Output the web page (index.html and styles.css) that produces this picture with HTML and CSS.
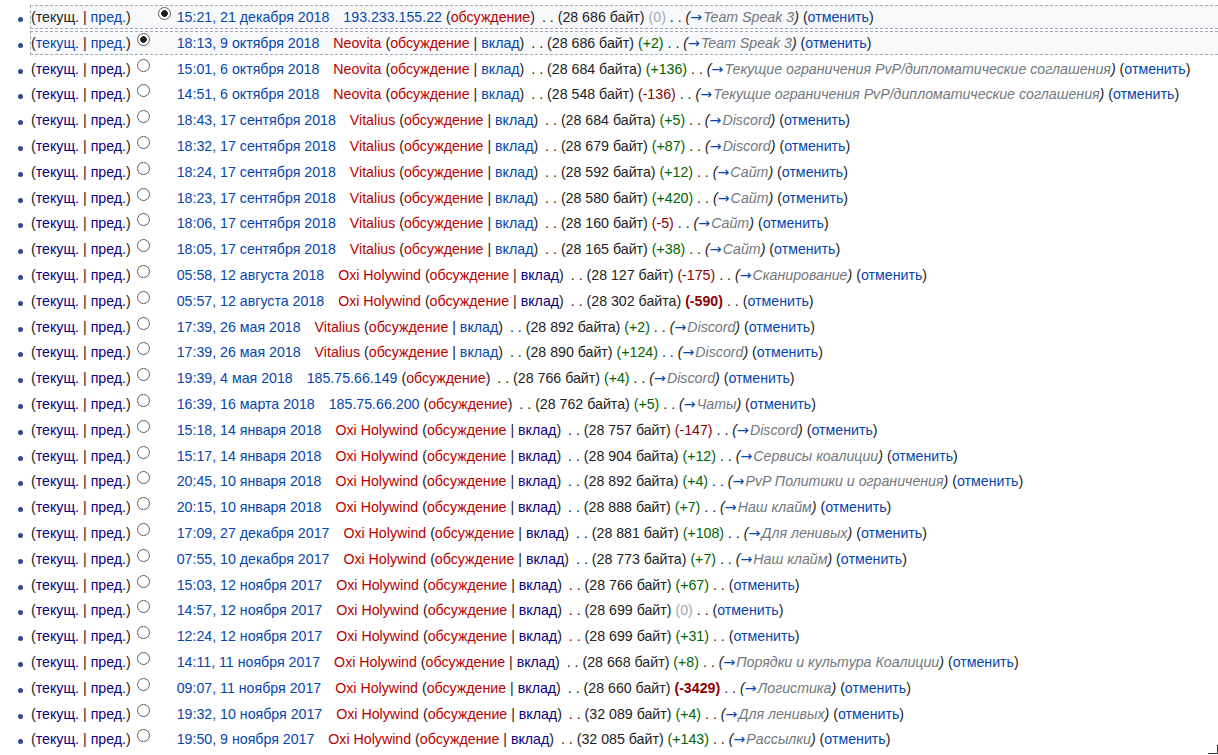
FILE: index.html
```html
<!DOCTYPE html>
<html lang="ru">
<head>
    <meta charset="UTF-8">
    <meta name="viewport" content="width=device-width, initial-scale=1.0">
    <title>История изменений</title>
    <link rel="stylesheet" href="styles.css">
</head>
<body>
    <!-- Список правок -->
    <ul id="pagehistory" class="history"></ul>

    <div class="grip"></div>

    <script>
        // дата, автор, тип автора, размер, разница, описание
        const revisions = [
            ['15:21, 21 декабря 2018', '193.233.155.22', 'ip', '28 686 байт', 0, 'Team Speak 3'],
            ['18:13, 9 октября 2018', 'Neovita', 'user', '28 686 байт', 2, 'Team Speak 3'],
            ['15:01, 6 октября 2018', 'Neovita', 'user', '28 684 байта', 136, 'Текущие ограничения PvP/дипломатические соглашения'],
            ['14:51, 6 октября 2018', 'Neovita', 'user', '28 548 байт', -136, 'Текущие ограничения PvP/дипломатические соглашения'],
            ['18:43, 17 сентября 2018', 'Vitalius', 'user', '28 684 байта', 5, 'Discord'],
            ['18:32, 17 сентября 2018', 'Vitalius', 'user', '28 679 байт', 87, 'Discord'],
            ['18:24, 17 сентября 2018', 'Vitalius', 'user', '28 592 байта', 12, 'Сайт'],
            ['18:23, 17 сентября 2018', 'Vitalius', 'user', '28 580 байт', 420, 'Сайт'],
            ['18:06, 17 сентября 2018', 'Vitalius', 'user', '28 160 байт', -5, 'Сайт'],
            ['18:05, 17 сентября 2018', 'Vitalius', 'user', '28 165 байт', 38, 'Сайт'],
            ['05:58, 12 августа 2018', 'Oxi Holywind', 'seen', '28 127 байт', -175, 'Сканирование'],
            ['05:57, 12 августа 2018', 'Oxi Holywind', 'seen', '28 302 байта', -590, null],
            ['17:39, 26 мая 2018', 'Vitalius', 'user', '28 892 байта', 2, 'Discord'],
            ['17:39, 26 мая 2018', 'Vitalius', 'user', '28 890 байт', 124, 'Discord'],
            ['19:39, 4 мая 2018', '185.75.66.149', 'ip', '28 766 байт', 4, 'Discord'],
            ['16:39, 16 марта 2018', '185.75.66.200', 'ip', '28 762 байта', 5, 'Чаты'],
            ['15:18, 14 января 2018', 'Oxi Holywind', 'seen', '28 757 байт', -147, 'Discord'],
            ['15:17, 14 января 2018', 'Oxi Holywind', 'seen', '28 904 байта', 12, 'Сервисы коалиции'],
            ['20:45, 10 января 2018', 'Oxi Holywind', 'seen', '28 892 байта', 4, 'PvP Политики и ограничения'],
            ['20:15, 10 января 2018', 'Oxi Holywind', 'seen', '28 888 байт', 7, 'Наш клайм'],
            ['17:09, 27 декабря 2017', 'Oxi Holywind', 'seen', '28 881 байт', 108, 'Для ленивых'],
            ['07:55, 10 декабря 2017', 'Oxi Holywind', 'seen', '28 773 байта', 7, 'Наш клайм'],
            ['15:03, 12 ноября 2017', 'Oxi Holywind', 'seen', '28 766 байт', 67, null],
            ['14:57, 12 ноября 2017', 'Oxi Holywind', 'seen', '28 699 байт', 0, null],
            ['12:24, 12 ноября 2017', 'Oxi Holywind', 'seen', '28 699 байт', 31, null],
            ['14:11, 11 ноября 2017', 'Oxi Holywind', 'seen', '28 668 байт', 8, 'Порядки и культура Коалиции'],
            ['09:07, 11 ноября 2017', 'Oxi Holywind', 'seen', '28 660 байт', -3429, 'Логистика'],
            ['19:32, 10 ноября 2017', 'Oxi Holywind', 'seen', '32 089 байт', 4, 'Для ленивых'],
            ['19:50, 9 ноября 2017', 'Oxi Holywind', 'seen', '32 085 байт', 143, 'Рассылки']
        ];

        const list = document.getElementById('pagehistory');

        revisions.forEach((rev, i) => {
            const [date, user, kind, size, diff, comment] = rev;
            const li = document.createElement('li');
            if (i < 2) li.className = 'selected';

            // ссылки текущ. | пред.
            let links;
            if (i === 0) links = '(текущ. | <a href="#">пред.</a>)';
            else if (i === 1) links = '(<a href="#">текущ.</a> | <a href="#">пред.</a>)';
            else links = '(<a href="#" class="visited">текущ.</a> | <a href="#" class="visited">пред.</a>)';

            const radios =
                '<input type="radio" name="oldid"' + (i === 0 ? ' class="hide"' : '') + (i === 1 ? ' checked' : '') + '>' +
                '<input type="radio" name="diff"' + (i === 0 ? ' checked' : ' class="hide"') + '>';

            // автор и его ссылки
            let userLink, tools;
            if (kind === 'ip') {
                userLink = '<a href="#">' + user + '</a>';
                tools = '(<a href="#" class="new">обсуждение</a>)';
            } else {
                userLink = '<a href="#" class="new">' + user + '</a>';
                tools = '(<a href="#" class="new">обсуждение</a> | <a href="#"' + (kind === 'seen' ? ' class="visited"' : '') + '>вклад</a>)';
            }

            // разница в байтах
            let diffCls = 'null', diffText = '(0)';
            if (diff > 0) { diffCls = 'pos'; diffText = '(+' + diff + ')'; }
            if (diff < 0) { diffCls = 'neg'; diffText = '(' + diff + ')'; }
            if (Math.abs(diff) > 500) diffCls += ' big';

            let html = '<span class="histlinks">' + links + '</span>' + radios +
                ' <a href="#" class="date">' + date + '</a>' +
                ' <span class="user">' + userLink + ' <span class="tools">' + tools + '</span></span>' +
                ' <span class="sep first">. .</span>' +
                ' <span class="size">(' + size + ')</span>' +
                ' <span class="diff ' + diffCls + '">' + diffText + '</span>' +
                ' <span class="sep">. .</span>';

            if (comment) {
                html += ' <span class="comment">(<a href="#" class="arrow">→</a><span class="auto">' + comment + '</span>)</span>';
            }
            html += ' <span class="undo">(<a href="#">отменить</a>)</span>';

            li.innerHTML = html;
            list.appendChild(li);
        });
    </script>
</body>
</html>
```

FILE: styles.css
```css
/* Основа */
html, body {
    margin: 0;
    padding: 0;
    background: #fff;
    overflow: hidden;
}

body {
    font-family: "Liberation Sans", Arial, sans-serif;
    font-size: 14.2px;
    color: #222;
}

a {
    color: #0645ad;
    text-decoration: none;
}

a.visited {
    color: #0b0080;
}

a.new {
    color: #ba0000;
}

/* Список правок */
.history {
    list-style: none;
    margin: 5px -60px 0 0;
    padding: 0 0 0 30px;
    line-height: 22.4px;
    white-space: nowrap;
}

.history li {
    position: relative;
    border: 1px solid transparent;
    margin-bottom: 1.4px;
}

.history li::before {
    content: '';
    position: absolute;
    left: -13px;
    top: 11px;
    width: 5px;
    height: 5px;
    border-radius: 50%;
    background: #2a4b8d;
}

.history li.selected {
    background: #f8f9fa;
    border: 1px dashed #a2a9b1;
}

/* Радиокнопки */
.history input {
    -webkit-appearance: none;
    appearance: none;
    box-sizing: border-box;
    width: 13px;
    height: 13px;
    margin: 0 2px 0 6px;
    border: 1px solid #5f5f5f;
    border-radius: 50%;
    background: #fff;
    vertical-align: 2px;
}

.history input:checked {
    background: radial-gradient(circle, #1e1e1e 0, #1e1e1e 3px, #fff 3.6px);
}

.history input.hide {
    visibility: hidden;
}

/* Части строки */
.user {
    margin-left: 10px;
}

.sep.first {
    margin-left: 3px;
}

.diff.pos {
    color: #006400;
}

.diff.neg {
    color: #8b0000;
}

.diff.null {
    color: #a2a9b1;
}

.diff.big {
    font-weight: bold;
}

.comment {
    font-style: italic;
}

.comment .arrow {
    font-family: "DejaVu Sans", sans-serif;
    font-style: normal;
    margin-right: 1px;
}

.comment .auto {
    color: #72777d;
}

/* Уголок окна */
.grip {
    position: fixed;
    right: 0;
    bottom: 1px;
    width: 9px;
    height: 8px;
    border-right: 1px solid #333;
    border-bottom: 1px solid #333;
}
```
